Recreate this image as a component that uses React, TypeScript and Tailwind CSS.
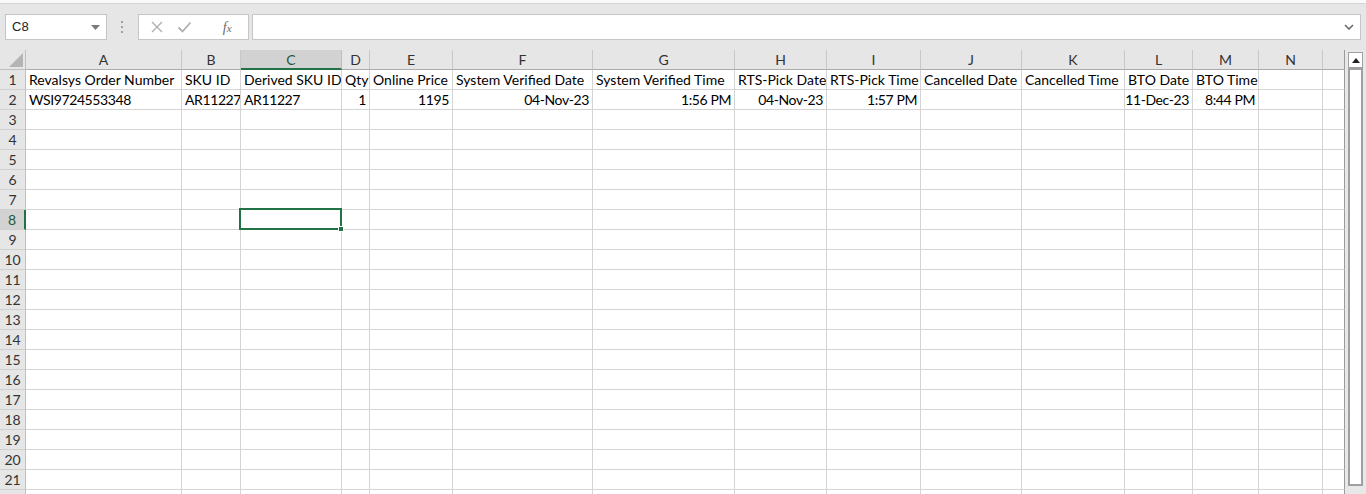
import React from "react";

const COLS = [
  { k: "A", w: 156 },
  { k: "B", w: 59 },
  { k: "C", w: 101 },
  { k: "D", w: 28 },
  { k: "E", w: 83 },
  { k: "F", w: 140 },
  { k: "G", w: 142 },
  { k: "H", w: 92 },
  { k: "I", w: 94 },
  { k: "J", w: 101 },
  { k: "K", w: 103 },
  { k: "L", w: 68 },
  { k: "M", w: 66 },
  { k: "N", w: 64 },
];

type Cell = { t: string; r?: boolean };

const ROW1: Cell[] = [
  { t: "Revalsys Order Number" },
  { t: "SKU ID" },
  { t: "Derived SKU ID" },
  { t: "Qty" },
  { t: "Online Price" },
  { t: "System Verified Date" },
  { t: "System Verified Time" },
  { t: "RTS-Pick Date" },
  { t: "RTS-Pick Time" },
  { t: "Cancelled Date" },
  { t: "Cancelled Time" },
  { t: "BTO Date" },
  { t: "BTO Time" },
  { t: "" },
];

const ROW2: Cell[] = [
  { t: "WSI9724553348" },
  { t: "AR11227" },
  { t: "AR11227" },
  { t: "1", r: true },
  { t: "1195", r: true },
  { t: "04-Nov-23", r: true },
  { t: "1:56 PM", r: true },
  { t: "04-Nov-23", r: true },
  { t: "1:57 PM", r: true },
  { t: "", r: true },
  { t: "", r: true },
  { t: "11-Dec-23", r: true },
  { t: "8:44 PM", r: true },
  { t: "" },
];

const FONT = { fontFamily: "Lato, 'Open Sans', Arial, sans-serif" };

function RowHeader({ n }: { n: number }) {
  const sel = n === 8;
  return (
    <div
      className={
        sel
          ? "w-[26px] shrink-0 h-full bg-[#d2d2d2] border-b border-[#cfcfcf] border-r-2 border-r-[#217346] flex items-center justify-center text-[14px] text-[#1e5a38]"
          : "w-[26px] shrink-0 h-full bg-[#e6e6e6] border-b border-[#d0d0d0] border-r border-r-[#bfbfbf] flex items-center justify-center text-[14px] text-[#333]"
      }
    >
      {n <= 21 ? n : ""}
    </div>
  );
}

function DataRow({ n, cells }: { n: number; cells?: Cell[] }) {
  const tight = n === 2;
  return (
    <div className="flex h-[20px]">
      <RowHeader n={n} />
      {COLS.map((c, i) => {
        const cell = cells ? cells[i] : undefined;
        let cls =
          cell && cell.r
            ? "shrink-0 h-full bg-white border-r border-b border-[#d4d4d4] flex items-center justify-end pr-[3px] text-[14px] text-black whitespace-nowrap overflow-hidden"
            : "shrink-0 h-full bg-white border-r border-b border-[#d4d4d4] flex items-center justify-start pl-[3px] text-[14px] text-black whitespace-nowrap overflow-hidden";
        if (tight) cls += " tracking-[-0.4px]";
        return (
          <div key={c.k} style={{ width: c.w }} className={cls}>
            {cell ? cell.t : ""}
          </div>
        );
      })}
      <div className="w-[22px] shrink-0 h-full bg-white border-b border-[#d4d4d4] border-r border-r-[#9a9a9a]" />
    </div>
  );
}

export default function App() {
  const rows = Array.from({ length: 22 }, (_, i) => i + 1);
  return (
    <div className="w-[1366px] h-[494px] overflow-hidden bg-[#e6e6e6] relative" style={FONT}>
      {/* top strip */}
      <div className="h-[4px] bg-[#fafafa] border-b border-[#d4d4d4]" />
      {/* formula bar */}
      <div className="h-[46px] flex items-start pt-[10px] pl-[5px] pr-[5px]">
        <div className="w-[102px] h-[26px] bg-white border border-[#c6c6c6] flex items-center justify-between pl-[6px] pr-[6px]">
          <span className="text-[13px] text-[#222]" style={{ fontFamily: "'Liberation Sans', Arial, sans-serif" }}>C8</span>
          <svg width="9" height="5" viewBox="0 0 9 5">
            <path d="M0 0 L9 0 L4.5 5 Z" fill="#7a7a7a" />
          </svg>
        </div>
        <div className="w-[31px] h-[26px] flex flex-col items-center justify-center gap-[3px]">
          <div className="w-[2px] h-[2px] bg-[#a0a0a0]" />
          <div className="w-[2px] h-[2px] bg-[#a0a0a0]" />
          <div className="w-[2px] h-[2px] bg-[#a0a0a0]" />
        </div>
        <div className="w-[111px] h-[26px] bg-white border border-[#c6c6c6] flex items-center">
          <svg width="14" height="14" viewBox="0 0 14 14" className="ml-[11px]">
            <path d="M2 2 L12 12 M12 2 L2 12" stroke="#b0b0b0" strokeWidth="1.4" />
          </svg>
          <svg width="15" height="14" viewBox="0 0 15 14" className="ml-[13px]">
            <path d="M1.5 7.5 L5.5 11.5 L13.5 2.5" stroke="#b0b0b0" strokeWidth="1.8" fill="none" />
          </svg>
          <span
            className="ml-[31px] text-[14px] italic text-[#6a6a6a]"
            style={{ fontFamily: "'Liberation Serif', 'Times New Roman', serif" }}
          >
            f<span className="text-[11px]">x</span>
          </span>
        </div>
        <div className="ml-[3px] w-[1111px] h-[26px] bg-white border border-[#c6c6c6] flex items-center justify-end pr-[6px]">
          <svg width="10" height="6" viewBox="0 0 10 6">
            <path d="M1 1 L5 5 L9 1" stroke="#6a6a6a" strokeWidth="1.6" fill="none" />
          </svg>
        </div>
      </div>
      {/* sheet */}
      <div className="flex">
        <div className="relative w-[1345px] shrink-0">
          {/* column header */}
          <div className="flex h-[20px]">
            <div className="w-[26px] shrink-0 h-full bg-[#e6e6e6] border-r border-b border-[#bfbfbf] flex items-end justify-end pr-[2px] pb-[2px]">
              <svg width="14" height="14" viewBox="0 0 14 14">
                <path d="M14 0 L14 14 L0 14 Z" fill="#b4b4b4" />
              </svg>
            </div>
            {COLS.map((c) =>
              c.k === "C" ? (
                <div
                  key={c.k}
                  style={{ width: c.w }}
                  className="shrink-0 h-full bg-[#d2d2d2] border-r border-r-[#bfbfbf] border-b-2 border-b-[#217346] flex items-center justify-center text-[14px] text-[#1e5a38]"
                >
                  {c.k}
                </div>
              ) : (
                <div
                  key={c.k}
                  style={{ width: c.w }}
                  className="shrink-0 h-full bg-[#e6e6e6] border-r border-b border-r-[#c8c8c8] border-b-[#ababab] flex items-center justify-center text-[14px] text-[#333]"
                >
                  {c.k}
                </div>
              )
            )}
            <div className="w-[22px] shrink-0 h-full bg-[#e6e6e6] border-b border-[#ababab] border-r border-r-[#9a9a9a]" />
          </div>
          {rows.map((n) => (
            <DataRow key={n} n={n} cells={n === 1 ? ROW1 : n === 2 ? ROW2 : undefined} />
          ))}
          {/* selection */}
          <div className="absolute left-[239px] top-[158px] w-[103px] h-[22px] border-2 border-[#217346]" />
          <div className="absolute left-[338px] top-[176px] w-[6px] h-[6px] bg-[#217346] border border-white" />
        </div>
        {/* vertical scrollbar */}
        <div className="w-[21px] shrink-0 bg-[#e8e8e8] pl-[3px] pt-[2px]">
          <div className="w-[15px] h-[16px] bg-white border border-[#a0a0a0] flex items-center justify-center">
            <svg width="8" height="5" viewBox="0 0 8 5">
              <path d="M0 5 L4 0 L8 5 Z" fill="#222" />
            </svg>
          </div>
          <div className="w-[15px] h-[418px] bg-white border-2 border-[#a0a0a0]" />
        </div>
      </div>
    </div>
  );
}
